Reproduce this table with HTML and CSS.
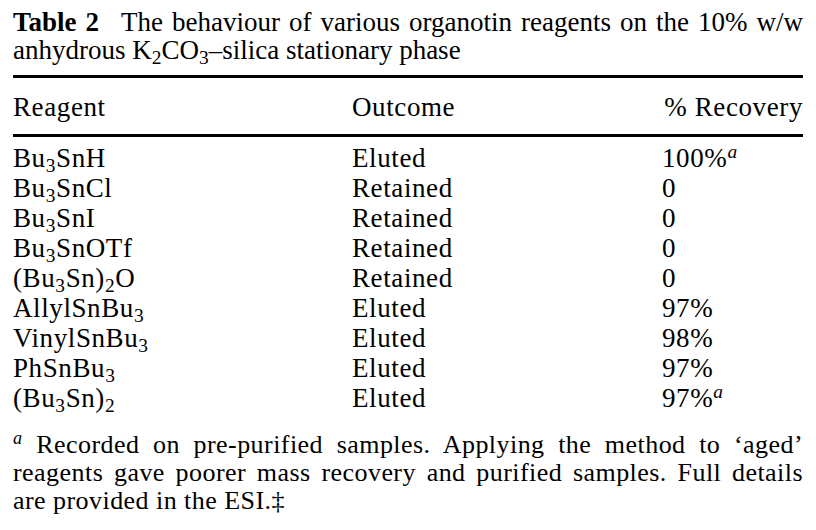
FILE: index.html
```html
<!DOCTYPE html>
<html>
<head>
<meta charset="utf-8">
<link rel="stylesheet" href="styles.css">
</head>
<body>
<div class="page">
  <p class="caption"><b class="label">Table 2</b><span class="gap"></span>The behaviour of various organotin reagents on the 10% w/w anhydrous K<sub>2</sub>CO<sub>3</sub>–silica stationary phase</p>
  <table class="data">
    <thead>
      <tr><th class="c1">Reagent</th><th class="c2">Outcome</th><th class="c3">% Recovery</th></tr>
    </thead>
    <tbody>
      <tr><td>Bu<sub>3</sub>SnH</td><td>Eluted</td><td>100%<sup>a</sup></td></tr>
      <tr><td>Bu<sub>3</sub>SnCl</td><td>Retained</td><td>0</td></tr>
      <tr><td>Bu<sub>3</sub>SnI</td><td>Retained</td><td>0</td></tr>
      <tr><td>Bu<sub>3</sub>SnOTf</td><td>Retained</td><td>0</td></tr>
      <tr><td>(Bu<sub>3</sub>Sn)<sub>2</sub>O</td><td>Retained</td><td>0</td></tr>
      <tr><td>AllylSnBu<sub>3</sub></td><td>Eluted</td><td>97%</td></tr>
      <tr><td>VinylSnBu<sub>3</sub></td><td>Eluted</td><td>98%</td></tr>
      <tr><td>PhSnBu<sub>3</sub></td><td>Eluted</td><td>97%</td></tr>
      <tr><td>(Bu<sub>3</sub>Sn)<sub>2</sub></td><td>Eluted</td><td>97%<sup>a</sup></td></tr>
    </tbody>
  </table>
  <p class="note"><sup>a</sup> Recorded on pre-purified samples. Applying the method to ‘aged’ reagents gave poorer mass recovery and purified samples. Full details are provided in the ESI.‡</p>
</div>
</body>
</html>
```

FILE: styles.css
```css
html, body {
  margin: 0;
  padding: 0;
  background: #fff;
}
.page {
  width: 790px;
  padding: 0 13px;
  font-family: "Liberation Serif", "Times New Roman", serif;
  color: #000;
}
.caption {
  margin: 0;
  padding-top: 8px;
  font-size: 27px;
  line-height: 28px;
  letter-spacing: 0;
  text-align: justify;
  text-align-last: left;
}
.caption .label {
  font-weight: bold;
}
.caption .gap {
  display: inline-block;
  width: 22px;
}
sub {
  font-size: 0.72em;
  vertical-align: -0.28em;
  line-height: 0;
}
sup {
  font-size: 0.72em;
  font-style: italic;
  vertical-align: 0.45em;
  line-height: 0;
}
.data {
  width: 790px;
  margin-top: 11px;
  border-collapse: collapse;
  border-top: 3px solid #000;
  font-size: 27px;
  letter-spacing: 0.6px;
}
.data th {
  font-weight: normal;
  text-align: left;
  padding: 15px 0 13px;
  line-height: 28px;
  border-bottom: 3px solid #000;
}
.data th.c3 {
  text-align: right;
}
.data .c1 { width: 339px; }
.data .c2 { width: 310px; }
.data .c3 { width: 141px; }
.data td {
  padding: 0;
  height: 30px;
  line-height: 30px;
  text-align: left;
}
.data tbody tr:first-child td {
  padding-top: 6px;
}
.note {
  margin: 18px 0 0;
  font-size: 26px;
  line-height: 28px;
  letter-spacing: 0.45px;
  text-align: justify;
}
.note sup {
  font-size: 0.7em;
  vertical-align: 0.5em;
}
```
